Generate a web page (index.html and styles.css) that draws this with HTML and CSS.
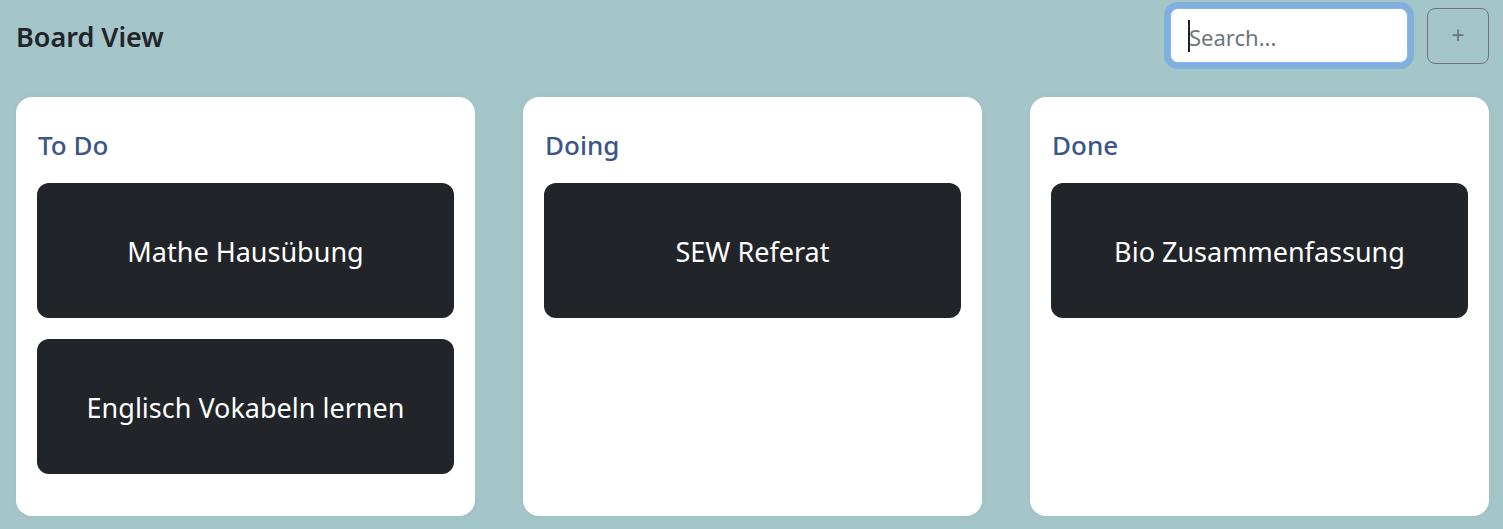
FILE: index.html
```html
<!DOCTYPE html>
<html lang="de">
<head>
<meta charset="utf-8">
<title>Board View</title>
<link rel="stylesheet" href="styles.css">
</head>
<body>
<header class="topbar">
  <h1 class="title">Board View</h1>
  <div class="actions">
    <div class="search-wrap">
      <input class="search" type="text" placeholder="Search...">
      <span class="caret"></span>
    </div>
    <button class="add-btn" type="button">+</button>
  </div>
</header>
<main class="board">
  <section class="column">
    <h2 class="column-title">To Do</h2>
    <div class="task">Mathe Hausübung</div>
    <div class="task">Englisch Vokabeln lernen</div>
  </section>
  <section class="column">
    <h2 class="column-title">Doing</h2>
    <div class="task">SEW Referat</div>
  </section>
  <section class="column">
    <h2 class="column-title">Done</h2>
    <div class="task">Bio Zusammenfassung</div>
  </section>
</main>
</body>
</html>
```
FILE: styles.css
```css
* { box-sizing: border-box; }

html, body {
  margin: 0;
  background: #a5c6c9;
}

body {
  padding: 8px 14px 0 16px;
  font-family: "Noto Sans", "Open Sans", sans-serif;
  color: #212529;
  height: 529px;
  overflow: hidden;
}

.topbar {
  display: flex;
  align-items: center;
  justify-content: space-between;
  height: 55px;
}

.title {
  margin: 0;
  padding-top: 4px;
  font-size: 27px;
  line-height: 1.2;
  font-weight: 600;
  color: #212529;
}

.actions {
  display: flex;
  align-items: center;
  gap: 19px;
}

.search-wrap {
  position: relative;
}

.search {
  display: block;
  width: 238px;
  height: 55px;
  padding: 2px 0 0 18px;
  border: 1px solid #86b7fe;
  border-radius: 8px;
  box-shadow: 0 0 0 6px #80b0dc;
  outline: none;
  background: #fff;
  font-family: "Noto Sans", "Open Sans", sans-serif;
  font-size: 22px;
  color: #212529;
}

.search::placeholder {
  color: #6c757d;
  opacity: 1;
}

.caret {
  position: absolute;
  left: 18px;
  top: 12px;
  width: 2px;
  height: 32px;
  background: #1f2328;
}

.add-btn {
  width: 62px;
  height: 56px;
  border: 1px solid #6c757d;
  border-radius: 8px;
  background: transparent;
  color: #6c757d;
  font-family: "Noto Sans", "Open Sans", sans-serif;
  font-size: 23px;
  line-height: 1;
  padding: 0;
}

.board {
  margin-top: 34px;
  display: grid;
  grid-template-columns: repeat(3, 459px);
  gap: 48px;
  align-items: stretch;
}

.column {
  background: #fff;
  border-radius: 16px;
  padding: 32px 21px 21px;
  box-shadow: 0 0 6px rgba(0, 0, 0, 0.04);
}

.column-title {
  margin: 1px 0 22px 1px;
  font-size: 26px;
  line-height: 1.2;
  font-weight: 500;
  color: #3b5586;
}

.task {
  display: flex;
  align-items: center;
  justify-content: center;
  height: 135px;
  margin-bottom: 21px;
  padding-top: 4px;
  background: #212529;
  border-radius: 12px;
  color: #fff;
  font-size: 27px;
  line-height: 1.2;
}
```
